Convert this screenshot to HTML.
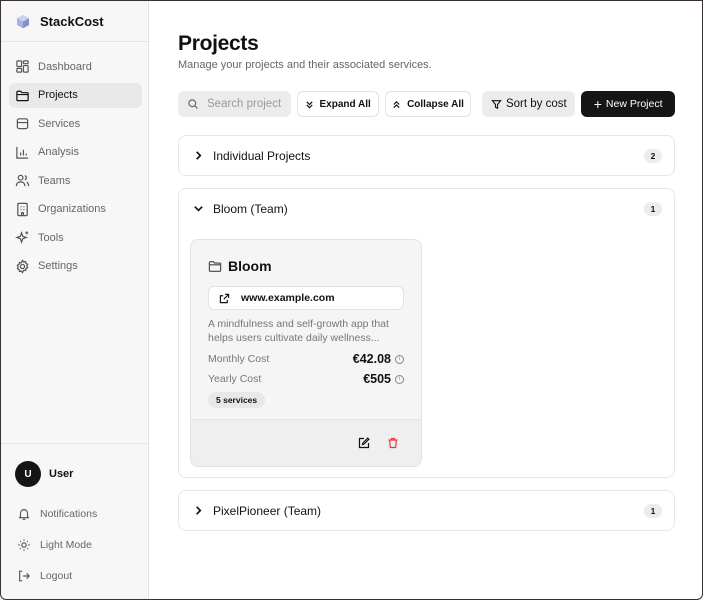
<!DOCTYPE html>
<html><head><meta charset="utf-8"><style>
*{box-sizing:border-box;margin:0;padding:0}
body{width:703px;height:600px;overflow:hidden;font-family:"Liberation Sans",sans-serif;background:#fff;position:relative;color:#111}
.frame{position:absolute;inset:0;border:1px solid #3a3035;border-radius:0 0 6px 6px;pointer-events:none}
.side{position:absolute;left:0;top:0;width:149px;height:600px;background:#f7f7f7;border-right:1px solid #e4e4e4}
.logo{height:42px;border-bottom:1px solid #e6e6e6;display:flex;align-items:center;padding-left:16px;padding-top:1px;font-weight:bold;font-size:13px}
.nav{padding-top:12px}
.it{display:flex;align-items:center;height:25px;margin:0 6px 3.5px 9px;padding-left:6px;font-size:11px;color:#666;border-radius:6px}
.it svg{width:15px;height:15px;margin-right:8px;stroke:#555;fill:none;stroke-width:1.3}
.it.act{background:#e9e9e9;color:#111}
.it.act svg{stroke:#111}
.bot{position:absolute;top:443px;left:0;right:0;border-top:1px solid #e6e6e6}
.user{display:flex;align-items:center;padding:17px 0 0 15px;font-size:11px;font-weight:bold}
.av{width:26px;height:26px;border-radius:50%;background:#151515;color:#fff;display:flex;align-items:center;justify-content:center;font-size:10px;margin-right:8px}
.bi{display:flex;align-items:center;font-size:10.5px;color:#666;padding-left:17px;height:31px}
.bi svg{width:14px;height:14px;margin-right:9px;stroke:#555;fill:none;stroke-width:1.3}
.main{position:absolute;left:178px;top:0;width:497px}
h1{font-size:21px;font-weight:bold;margin-top:32px;letter-spacing:-.3px}
.sub{font-size:11px;color:#666;margin-top:3px}
.tb{display:flex;margin-top:19px;height:28px;align-items:center}
.btn{height:26px;border:1px solid #e2e2e2;border-radius:6px;display:flex;align-items:center;justify-content:center;font-size:10px;font-weight:bold;background:#fff}
.acc{border:1px solid #e6e6e6;border-radius:8px;margin-bottom:12px}
.ah{height:39px;display:flex;align-items:center;padding:0 12px 0 14px;font-size:12px}
.ah svg{width:11px;height:11px;stroke:#111;fill:none;stroke-width:1.8;margin-right:9px}
.badge{margin-left:auto;background:#ececec;border-radius:9px;font-size:8.5px;font-weight:bold;width:18px;height:14px;display:flex;align-items:center;justify-content:center}
.card{margin:11px 0 10px 11px;width:232px;height:228px;background:#f5f5f5;border:1px solid #e3e3e3;border-radius:8px;overflow:hidden;position:relative}
.gray{color:#777}
</style></head><body>
<div class="side">
 <div class="logo"><svg width="14" height="15" viewBox="0 0 14 15" style="margin-right:10px"><path d="M7 1L13 4.3V11L7 14.3L1 11V4.3Z" fill="#a8b3e0"/><path d="M7 1L13 4.3L7 7.6L1 4.3Z" fill="#ccd3f0"/><path d="M7 7.6V14.3L13 11V4.3Z" fill="#8791c9"/></svg>StackCost</div>
 <div class="nav">
  <div class="it"><svg viewBox="0 0 16 16"><rect x="2" y="2" width="5" height="6" rx="1"/><rect x="9" y="2" width="5" height="3" rx="1"/><rect x="2" y="10" width="5" height="4" rx="1"/><rect x="9" y="7" width="5" height="7" rx="1"/></svg>Dashboard</div>
  <div class="it act"><svg viewBox="0 0 16 16"><path d="M2 4.5a1 1 0 0 1 1-1h3l1.5 1.5h5.5a1 1 0 0 1 1 1v6.5a1 1 0 0 1-1 1H3a1 1 0 0 1-1-1z M2 7h12"/></svg>Projects</div>
  <div class="it"><svg viewBox="0 0 16 16"><rect x="2.5" y="3" width="11" height="10.5" rx="2"/><path d="M2.5 7h11"/></svg>Services</div>
  <div class="it"><svg viewBox="0 0 16 16"><path d="M2 2v12h12M6 11V8M9 11V5M12 11V9"/></svg>Analysis</div>
  <div class="it"><svg viewBox="0 0 16 16"><circle cx="6" cy="5" r="2.5"/><path d="M1.5 14c0-3 2-4.5 4.5-4.5s4.5 1.5 4.5 4.5M10.5 2.7a2.5 2.5 0 0 1 0 4.6M12.5 9.8c1.3.6 2 2 2 4.2"/></svg>Teams</div>
  <div class="it"><svg viewBox="0 0 16 16"><rect x="3" y="1.5" width="10" height="13" rx="1"/><path d="M6 5h1M9 5h1M6 8h1M9 8h1M7 14.5v-3h2v3"/></svg>Organizations</div>
  <div class="it"><svg viewBox="0 0 16 16"><path d="M7 3l1.3 3.7L12 8l-3.7 1.3L7 13l-1.3-3.7L2 8l3.7-1.3zM12.5 1.5v3M11 3h3"/></svg>Tools</div>
  <div class="it"><svg viewBox="0 0 16 16"><circle cx="8" cy="8" r="2.2"/><path d="M8 1.5l1.3 1.6 2-.4.4 2 1.8 1-.9 1.8.9 1.8-1.8 1-.4 2-2-.4L8 14.5l-1.3-1.6-2 .4-.4-2-1.8-1 .9-1.8-.9-1.8 1.8-1 .4-2 2 .4z"/></svg>Settings</div>
 </div>
 <div class="bot">
  <div class="user"><div class="av">U</div>User</div>
  <div style="height:11px"></div>
  <div class="bi"><svg viewBox="0 0 16 16"><path d="M4 11V7a4 4 0 0 1 8 0v4l1 1.2H3zM6.5 14h3"/></svg>Notifications</div>
  <div class="bi"><svg viewBox="0 0 16 16"><circle cx="8" cy="8" r="2.5"/><path d="M8 1.5v1.5M8 13v1.5M1.5 8H3M13 8h1.5M3.4 3.4l1 1M11.6 11.6l1 1M3.4 12.6l1-1M11.6 4.4l1-1"/></svg>Light Mode</div>
  <div class="bi"><svg viewBox="0 0 16 16"><path d="M6 2.5H3v11h3M7 8h7M11 5l3 3-3 3"/></svg>Logout</div>
 </div>
</div>
<div class="main">
 <h1>Projects</h1>
 <div class="sub">Manage your projects and their associated services.</div>
 <div class="tb">
  <div class="btn" style="width:113px;background:#ececec;border-color:#ececec;justify-content:flex-start;padding-left:8px;font-weight:normal;font-size:11.5px;color:#999"><svg width="12" height="12" viewBox="0 0 16 16" style="margin-right:8px" fill="none" stroke="#666" stroke-width="1.6"><circle cx="7" cy="7" r="4.5"/><path d="M10.5 10.5L14 14"/></svg>Search project</div>
  <div class="btn" style="width:82px;margin-left:6px"><svg width="9" height="9" viewBox="0 0 10 10" fill="none" stroke="#111" stroke-width="1.3" style="margin-right:6px"><path d="M2 2l3 3 3-3M2 5.5l3 3 3-3"/></svg>Expand All</div>
  <div class="btn" style="width:87px;margin-left:6px"><svg width="9" height="9" viewBox="0 0 10 10" fill="none" stroke="#111" stroke-width="1.3" style="margin-right:6px"><path d="M2 5l3-3 3 3M2 8.5l3-3 3 3"/></svg>Collapse All</div>
  <div class="btn" style="width:93px;margin-left:11px;background:#ececec;border-color:#ececec;font-weight:normal;font-size:11.5px"><svg width="11" height="11" viewBox="0 0 16 16" fill="none" stroke="#111" stroke-width="1.6" style="margin-right:4px"><path d="M2 2.5h12L9.5 8v5.5l-3-1.5V8z"/></svg>Sort by cost</div>
  <div class="btn" style="width:94px;margin-left:6px;background:#151515;border-color:#151515;color:#fff;font-weight:normal;font-size:10.5px"><span style="font-size:14px;margin-right:4px">+</span>New Project</div>
 </div>
 <div style="height:17px"></div>
 <div class="acc"><div class="ah"><svg viewBox="0 0 12 12"><path d="M4 2l4 4-4 4"/></svg>Individual Projects<div class="badge">2</div></div></div>
 <div class="acc"><div class="ah"><svg viewBox="0 0 12 12"><path d="M2 4l4 4 4-4"/></svg>Bloom (Team)<div class="badge">1</div></div>
  <div class="card">
   <div style="display:flex;align-items:center;padding:18px 0 0 17px;font-size:14px;font-weight:bold"><svg width="14" height="13" viewBox="0 0 16 15" fill="none" stroke="#444" stroke-width="1.3" style="margin-right:6px"><path d="M1.5 3a1 1 0 0 1 1-1h3.5l1.5 1.5h6a1 1 0 0 1 1 1v7.5a1 1 0 0 1-1 1h-11a1 1 0 0 1-1-1zM1.5 5.5h13"/></svg>Bloom</div>
   <div style="margin:12px 17px 0 17px;height:24px;background:#fff;border:1px solid #e3e3e3;border-radius:6px;display:flex;align-items:center;padding-left:10px;font-size:10.5px;font-weight:bold"><svg width="11" height="11" viewBox="0 0 16 16" fill="none" stroke="#111" stroke-width="1.7" style="margin-right:11px"><path d="M9 2h5v5M14 2L7 9M12 10v4H2V4h4"/></svg>www.example.com</div>
   <div class="gray" style="font-size:10.5px;line-height:14px;padding:7px 17px 0">A mindfulness and self-growth app that helps users cultivate daily wellness...</div>
   <div style="display:flex;font-size:10.5px;padding:7px 17px 0;align-items:center"><span class="gray">Monthly Cost</span><b style="margin-left:auto;font-size:12.5px">€42.08</b><span style="margin-left:4px;width:9px;height:9px;border:1px solid #888;border-radius:50%;font-size:6px;color:#888;display:inline-flex;align-items:center;justify-content:center">i</span></div>
   <div style="display:flex;font-size:10.5px;padding:6px 17px 0;align-items:center"><span class="gray">Yearly Cost</span><b style="margin-left:auto;font-size:12.5px">€505</b><span style="margin-left:4px;width:9px;height:9px;border:1px solid #888;border-radius:50%;font-size:6px;color:#888;display:inline-flex;align-items:center;justify-content:center">i</span></div>
   <div style="margin:6px 0 0 17px;display:inline-block;background:#e8e8e8;border-radius:8px;font-size:8.5px;font-weight:bold;padding:3px 8px">5 services</div>
   <div style="position:absolute;left:0;right:0;bottom:0;height:47px;background:#efefef;border-top:1px solid #e6e6e6">
    <svg width="12" height="12" viewBox="0 0 16 16" fill="none" stroke="#111" stroke-width="1.6" style="position:absolute;left:167px;top:17px"><path d="M8 2H2v12h12V8M13 1.5l1.5 1.5L8 9.5 6 10l.5-2z"/></svg>
    <svg width="12" height="12" viewBox="0 0 16 16" fill="none" stroke="#e53935" stroke-width="1.6" style="position:absolute;left:196px;top:17px"><path d="M2 4h12M6 4V2h4v2M3.5 4l1 10h7l1-10"/></svg>
   </div>
  </div>
 </div>
 <div class="acc"><div class="ah"><svg viewBox="0 0 12 12"><path d="M4 2l4 4-4 4"/></svg>PixelPioneer (Team)<div class="badge">1</div></div></div>
</div>
<div class="frame"></div>
</body></html>
